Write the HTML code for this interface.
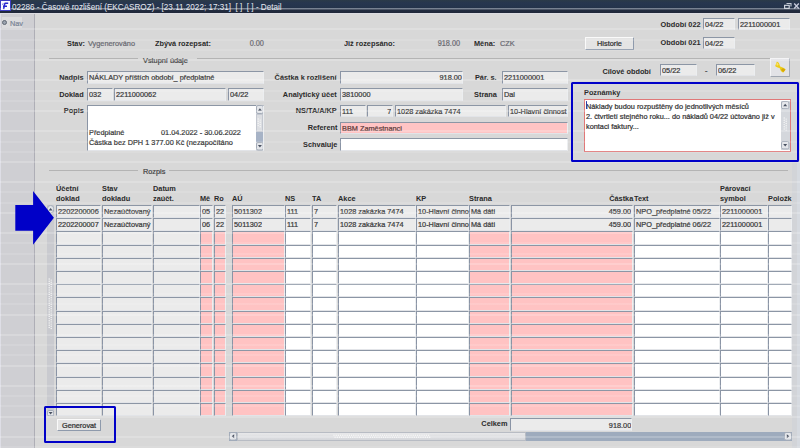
<!DOCTYPE html>
<html><head><meta charset="utf-8">
<style>
html,body{margin:0;padding:0;width:800px;height:448px;overflow:hidden;background:#d8d8d8;}
body{position:relative;font-family:"Liberation Sans",sans-serif;font-size:7.6px;}
.t{position:absolute;white-space:nowrap;line-height:1.4;transform:scaleX(0.965);transform-origin:0 50%;-webkit-text-stroke:0.22px currentColor;}
.t[style*=bold]{-webkit-text-stroke:0;}
.r{transform-origin:100% 50%;}
.c{transform-origin:50% 50%;}
.b{position:absolute;box-sizing:border-box;}
.f{position:absolute;box-sizing:border-box;border-top:1.6px solid #8c96a5;border-left:1.4px solid #8a94a5;border-right:1.2px solid #eceef0;border-bottom:1.2px solid #e2e4e8;}
</style></head><body>

<div class="b" style="left:0px;top:0px;width:800px;height:12.8px;background:linear-gradient(#2b3a48 0px,#27364f 3px,#25344c 7px,#222c40 10px,#20283a 12.8px);"></div>
<div class="b" style="left:0px;top:12.8px;width:800px;height:1.2px;background:#dcdce2;"></div>
<div class="b" style="left:0px;top:8.1px;width:800px;height:1.2px;background:rgba(190,200,215,0.35);"></div>
<div class="b" style="left:0px;top:0px;width:10.5px;height:10.5px;background:#3c3cc0;"></div>
<div class="b" style="left:1px;top:1px;width:9px;height:9px;background:#fafaff;"></div>
<svg style="position:absolute;left:0;top:0" width="11" height="11"><path d="M3.6 9.2L4.6 4.2L5.2 3.2H8.2M3 6.2H7" fill="none" stroke="#2626d0" stroke-width="1.6"/><path d="M2.2 4.4L3.4 3.6" stroke="#4a4ac8" stroke-width="1"/></svg>
<div class="t" style="left:11.8px;top:0.87px;color:#e4e8f0;font-size:9.2px;transform:scaleX(0.885);-webkit-text-stroke:0;">02286 - Časové rozlišení (EKCASROZ) - [23.11.2022; 17:31]&nbsp; [ ]&nbsp; [ ] - Detail</div>
<svg style="position:absolute;left:783px;top:0px" width="17" height="12"><path d="M3.5 3.5h4.5v3" fill="none" stroke="#c4cad4" stroke-width="1.1"/><rect x="1.6" y="5.3" width="4.6" height="3" fill="none" stroke="#d8dde6" stroke-width="1.1"/><path d="M11.2 3.5l4.6 5M15.8 3.5l-4.6 5" stroke="#c8ccdc" stroke-width="1.3"/></svg>
<div class="b" style="left:0px;top:14px;width:34px;height:434px;background:#cfcfd3;border-left:1.5px solid #dedee6;"></div>
<div class="b" style="left:34px;top:14px;width:1px;height:434px;background:#aeaeb6;"></div>
<div class="b" style="left:1.5px;top:17px;width:20.5px;height:10.6px;background:#dcdcde;"></div>
<div class="b" style="left:2px;top:19.8px;width:5.2px;height:5.2px;border-radius:50%;background:#9aa2ae;border:1px solid #606874;"></div>
<div class="t" style="left:9.8px;top:18.75px;color:#7a8596;">Nav</div>
<div class="b" style="left:792.3px;top:162px;width:7.7px;height:286px;background:#d2d4d8;"></div>
<div class="b" style="left:796.5px;top:162px;width:3.5px;height:286px;background:#d6dae0;"></div>
<div class="b" style="left:49px;top:58px;width:88.5px;height:1px;background:#b4b4b4;"></div>
<div class="t" style="left:143px;top:55.85px;color:#444;">Vstupní údaje</div>
<div class="b" style="left:197px;top:58px;width:573px;height:1px;background:#b4b4b4;"></div>
<div class="b" style="left:49px;top:170px;width:89px;height:1px;background:#b4b4b4;"></div>
<div class="t" style="left:143.1px;top:166.90px;color:#444;">Rozpis</div>
<div class="b" style="left:169.4px;top:170px;width:619px;height:1px;background:#b4b4b4;"></div>
<div class="t" style="left:67px;top:38.43px;color:#2a2a2a;font-size:8.0px;transform:scaleX(0.917);font-weight:bold;">Stav:</div>
<div class="t" style="left:87.5px;top:38.85px;color:#6a6a72;">Vygenerováno</div>
<div class="t" style="left:154.5px;top:38.43px;color:#2a2a2a;font-size:8.0px;transform:scaleX(0.917);font-weight:bold;">Zbývá rozepsat:</div>
<div class="t r" style="right:536px;top:38.22px;color:#6a6a72;font-size:8.2px;transform:scaleX(0.895);">0.00</div>
<div class="t" style="left:343.75px;top:38.43px;color:#2a2a2a;font-size:8.0px;transform:scaleX(0.917);font-weight:bold;">Již rozepsáno:</div>
<div class="t r" style="right:339.5px;top:38.22px;color:#6a6a72;font-size:8.2px;transform:scaleX(0.895);">918.00</div>
<div class="t" style="left:473.75px;top:38.43px;color:#2a2a2a;font-size:8.0px;transform:scaleX(0.917);font-weight:bold;">Měna:</div>
<div class="t" style="left:500px;top:38.85px;color:#6a6a72;">CZK</div>
<div class="b" style="left:585px;top:37.4px;width:49px;height:12.2px;background:#e4e4e4;border:1px solid #fafafa;border-right-color:#8e9aac;border-bottom:1.5px solid #8e9aac;border-radius:1px;"></div>
<div class="t c" style="left:585px;width:49px;text-align:center;top:39.05px;color:#2e2e2e;">Historie</div>
<div class="t r" style="right:99.70000000000005px;top:18.93px;color:#2a2a2a;font-size:8.0px;transform:scaleX(0.917);font-weight:bold;">Období 022</div>
<div class="f" style="left:703px;top:18px;width:32px;height:12px;background:#ebebeb;"></div>
<div class="t" style="left:705px;width:31.09px;top:19.85px;color:#3a3a3a;overflow:hidden">04/22</div>
<div class="f" style="left:738px;top:18px;width:52px;height:12px;background:#ebebeb;"></div>
<div class="t" style="left:740px;width:51.81px;top:19.85px;color:#3a3a3a;overflow:hidden">2211000001</div>
<div class="t r" style="right:99.70000000000005px;top:37.33px;color:#2a2a2a;font-size:8.0px;transform:scaleX(0.917);font-weight:bold;">Období 021</div>
<div class="f" style="left:703px;top:37px;width:32px;height:12px;background:#ebebeb;"></div>
<div class="t" style="left:705px;width:31.09px;top:38.85px;color:#3a3a3a;overflow:hidden">04/22</div>
<div class="t r" style="right:149px;top:65.73px;color:#2a2a2a;font-size:8.0px;transform:scaleX(0.917);font-weight:bold;">Cílové období</div>
<div class="f" style="left:660px;top:64px;width:37px;height:12px;background:#ebebeb;"></div>
<div class="t" style="left:662px;width:36.27px;top:65.85px;color:#3a3a3a;overflow:hidden">05/22</div>
<div class="t" style="left:705px;top:66.15px;color:#444;">-</div>
<div class="f" style="left:716px;top:64.4px;width:39px;height:11.6px;background:#ebebeb;"></div>
<div class="t" style="left:718px;width:38.34px;top:66.05px;color:#3a3a3a;overflow:hidden">06/22</div>
<div class="b" style="left:770.3px;top:57.6px;width:19.3px;height:19.1px;background:#e2e2e6;border:1.2px solid #f4f4f6;border-right-color:#a8aeb8;border-bottom:1.5px solid #a0a6b0;"></div>
<svg style="position:absolute;left:770px;top:57px" width="20" height="20"><path d="M6.8 4.8C8 4.6 9.3 6.2 9.6 8L10.2 9.6L12 10.2C13.6 10.6 15.2 11.6 15.6 12.6L13.4 15.4C12 15.2 10.6 13.8 10.2 12.4L9.6 11C8 10.8 6 10 5.2 9Z" fill="#eccc18"/><path d="M12.6 11.2C14 11.4 15 12.2 15.4 12.8L13.4 15C12.4 14.6 11.4 13.6 11.2 12.6Z" fill="#d8a808"/><path d="M6.8 5.4C7.6 5.6 8.4 6.8 8.6 8L7 8.8C6.4 8 6.2 6.6 6.8 5.4Z" fill="#f8e070"/></svg>
<div class="t r" style="right:716px;top:72.23px;color:#2a2a2a;font-size:8.0px;transform:scaleX(0.917);font-weight:bold;">Nadpis</div>
<div class="f" style="left:87px;top:71px;width:177px;height:12.8px;background:#ebebeb;"></div>
<div class="t" style="left:89px;width:181.35px;top:73.25px;color:#3a3a3a;overflow:hidden">NÁKLADY příštích období_ předplatné</div>
<div class="t r" style="right:716px;top:89.23px;color:#2a2a2a;font-size:8.0px;transform:scaleX(0.917);font-weight:bold;">Doklad</div>
<div class="f" style="left:87px;top:88.2px;width:26px;height:12.6px;background:#ebebeb;"></div>
<div class="t" style="left:89px;width:24.87px;top:90.35px;color:#3a3a3a;overflow:hidden">032</div>
<div class="f" style="left:114.4px;top:88.2px;width:112px;height:12.6px;background:#ebebeb;"></div>
<div class="t" style="left:116.4px;width:113.99px;top:90.35px;color:#3a3a3a;overflow:hidden">2211000062</div>
<div class="f" style="left:227.5px;top:88.2px;width:36.5px;height:12.6px;background:#ebebeb;"></div>
<div class="t" style="left:229.5px;width:35.75px;top:90.35px;color:#3a3a3a;overflow:hidden">04/22</div>
<div class="t r" style="right:716px;top:105.33px;color:#2a2a2a;font-size:8.0px;transform:scaleX(0.917);font-weight:bold;">Popis</div>
<div class="f" style="left:87.2px;top:104.8px;width:176.5px;height:46px;background:#fff;"></div>
<div class="t" style="left:89px;top:127.75px;color:#333;">Předplatné</div>
<div class="t" style="left:161.3px;top:127.75px;color:#333;">01.04.2022 - 30.06.2022</div>
<div class="t" style="left:89px;top:137.90px;color:#333;">Částka bez DPH 1 377.00 Kč (nezapočítáno</div>
<div class="b" style="left:88px;top:147.5px;width:166px;height:2.5px;overflow:hidden"><div class="t" style="left:1px;top:0.25px;color:#555">vč. úhrad 3 dílčích faktur</div></div>
<div class="b" style="left:255.5px;top:105px;width:7.8px;height:45.5px;background:#d2d5da;"></div>
<svg style="position:absolute;left:255.5px;top:105px" width="7.8" height="9"><rect x="0.5" y="0.5" width="6.8" height="8" rx="1.5" fill="#e4e6ea" stroke="#a4acb8" stroke-width="1"/><path d="M1.90 5.70L3.90 3.20L5.90 5.70Z" fill="#4a5262"/></svg>
<div class="b" style="left:255.5px;top:114px;width:7.8px;height:17.8px;background:#dcdee2;border:1px solid #c4c8d0;"></div>
<svg style="position:absolute;left:257px;top:118px" width="5.0" height="10.8"><circle cx="1.2" cy="1.00" r="0.7" fill="#f8f8f8"/><circle cx="3.2" cy="2.10" r="0.7" fill="#f8f8f8"/><circle cx="1.2" cy="3.20" r="0.7" fill="#f8f8f8"/><circle cx="3.2" cy="4.30" r="0.7" fill="#f8f8f8"/><circle cx="1.2" cy="5.40" r="0.7" fill="#f8f8f8"/><circle cx="3.2" cy="6.50" r="0.7" fill="#f8f8f8"/><circle cx="1.2" cy="7.60" r="0.7" fill="#f8f8f8"/><circle cx="3.2" cy="8.70" r="0.7" fill="#f8f8f8"/></svg>
<div class="b" style="left:255.5px;top:131.8px;width:7.8px;height:10.2px;background:#a7b3c6;"></div>
<svg style="position:absolute;left:255.5px;top:142px" width="7.8" height="8.5"><rect x="0.5" y="0.5" width="6.8" height="7.5" rx="1.5" fill="#e4e6ea" stroke="#a4acb8" stroke-width="1"/><path d="M1.90 3.05L3.90 5.55L5.90 3.05Z" fill="#4a5262"/></svg>
<div class="t r" style="right:463px;top:72.23px;color:#2a2a2a;font-size:8.0px;transform:scaleX(0.917);font-weight:bold;">Částka k rozlišení</div>
<div class="f" style="left:340px;top:71px;width:123px;height:12.8px;background:#ebebeb;"></div>
<div class="t r" style="left:335.59px;width:125.91px;text-align:right;top:73.25px;color:#3a3a3a;overflow:hidden">918.00</div>
<div class="t r" style="right:463px;top:89.23px;color:#2a2a2a;font-size:8.0px;transform:scaleX(0.917);font-weight:bold;">Analytický účet</div>
<div class="f" style="left:340px;top:88.2px;width:123px;height:12.6px;background:#ebebeb;"></div>
<div class="t" style="left:342px;width:125.39px;top:90.35px;color:#3a3a3a;overflow:hidden">3810000</div>
<div class="t r" style="right:463px;top:105.43px;color:#2a2a2a;font-size:8.0px;transform:scaleX(0.917);font-weight:bold;">NS/TA/A/KP</div>
<div class="f" style="left:340px;top:105px;width:25.6px;height:12px;background:#ebebeb;"></div>
<div class="t" style="left:342px;width:24.46px;top:106.85px;color:#3a3a3a;overflow:hidden">111</div>
<div class="f" style="left:367px;top:105px;width:26px;height:12px;background:#ebebeb;"></div>
<div class="t r" style="left:366.11px;width:25.39px;text-align:right;top:106.85px;color:#3a3a3a;overflow:hidden">7</div>
<div class="f" style="left:394.6px;top:105px;width:111px;height:12px;background:#ebebeb;"></div>
<div class="t" style="left:396.6px;width:112.95px;top:106.85px;color:#3a3a3a;overflow:hidden">1028 zakázka 7474</div>
<div class="f" style="left:507.5px;top:105px;width:60px;height:12px;background:#ebebeb;"></div>
<div class="t" style="left:509.5px;width:60.10px;top:106.85px;color:#3a3a3a;overflow:hidden">10-Hlavní činnost</div>
<div class="t r" style="right:463px;top:122.33px;color:#2a2a2a;font-size:8.0px;transform:scaleX(0.917);font-weight:bold;">Referent</div>
<div class="f" style="left:340px;top:122.2px;width:227.5px;height:11.8px;background:#ffc4c4;"></div>
<div class="t" style="left:342px;width:233.68px;top:123.95px;color:#5a3838;overflow:hidden">BBM Zaměstnanci</div>
<div class="t r" style="right:463px;top:138.83px;color:#2a2a2a;font-size:8.0px;transform:scaleX(0.917);font-weight:bold;">Schvaluje</div>
<div class="f" style="left:340px;top:138px;width:227.5px;height:12.5px;background:#fff;"></div>
<div class="t r" style="right:303px;top:72.23px;color:#2a2a2a;font-size:8.0px;transform:scaleX(0.917);font-weight:bold;">Pár. s.</div>
<div class="f" style="left:502px;top:71px;width:66px;height:12.8px;background:#ebebeb;"></div>
<div class="t" style="left:504px;width:66.32px;top:73.25px;color:#3a3a3a;overflow:hidden">2211000001</div>
<div class="t r" style="right:303px;top:89.23px;color:#2a2a2a;font-size:8.0px;transform:scaleX(0.917);font-weight:bold;">Strana</div>
<div class="f" style="left:502px;top:88.2px;width:66px;height:12.6px;background:#ebebeb;"></div>
<div class="t" style="left:504px;width:66.32px;top:90.35px;color:#3a3a3a;overflow:hidden">Dal</div>
<div class="b" style="left:571.3px;top:82.3px;width:227.8px;height:79.9px;border:2.9px solid #0000c8;border-radius:1.5px;z-index:5;"></div>
<div class="t" style="left:584px;top:87.13px;color:#2a2a2a;font-size:8.0px;transform:scaleX(0.917);font-weight:bold;">Poznámky</div>
<div class="b" style="left:584.2px;top:98.5px;width:206.8px;height:53px;background:#fff;border:1px solid #e07878;"></div>
<div class="t" style="left:586.4px;top:101.65px;color:#333;">Náklady budou rozpuštěny do jednotlivých měsíců</div>
<div class="b" style="left:585.6px;top:100.8px;width:1px;height:8.6px;background:#3040a0;"></div>
<div class="t" style="left:586.4px;top:111.95px;color:#333;">2. čtvrtletí stejného roku... do nákladů 04/22 účtováno již v</div>
<div class="t" style="left:586.4px;top:122.15px;color:#333;">kontaci faktury...</div>
<div class="b" style="left:781.2px;top:101px;width:8.4px;height:49px;background:#d4d7dc;"></div>
<svg style="position:absolute;left:781.2px;top:100.8px" width="8.4" height="8.2"><rect x="0.5" y="0.5" width="7.4" height="7.199999999999999" rx="1.5" fill="#e4e6ea" stroke="#a4acb8" stroke-width="1"/><path d="M2.20 5.30L4.20 2.80L6.20 5.30Z" fill="#4a5262"/></svg>
<svg style="position:absolute;left:783px;top:117px" width="5.0" height="15.2"><circle cx="1.2" cy="1.00" r="0.7" fill="#f8f8f8"/><circle cx="3.2" cy="2.10" r="0.7" fill="#f8f8f8"/><circle cx="1.2" cy="3.20" r="0.7" fill="#f8f8f8"/><circle cx="3.2" cy="4.30" r="0.7" fill="#f8f8f8"/><circle cx="1.2" cy="5.40" r="0.7" fill="#f8f8f8"/><circle cx="3.2" cy="6.50" r="0.7" fill="#f8f8f8"/><circle cx="1.2" cy="7.60" r="0.7" fill="#f8f8f8"/><circle cx="3.2" cy="8.70" r="0.7" fill="#f8f8f8"/><circle cx="1.2" cy="9.80" r="0.7" fill="#f8f8f8"/><circle cx="3.2" cy="10.90" r="0.7" fill="#f8f8f8"/><circle cx="1.2" cy="12.00" r="0.7" fill="#f8f8f8"/><circle cx="3.2" cy="13.10" r="0.7" fill="#f8f8f8"/></svg>
<svg style="position:absolute;left:781.2px;top:141.4px" width="8.4" height="8.4"><rect x="0.5" y="0.5" width="7.4" height="7.4" rx="1.5" fill="#e4e6ea" stroke="#a4acb8" stroke-width="1"/><path d="M2.20 3.00L4.20 5.50L6.20 3.00Z" fill="#4a5262"/></svg>
<div class="t" style="left:56px;top:183.43px;color:#2a2a2a;font-size:8.0px;transform:scaleX(0.917);font-weight:bold;">Účetní</div>
<div class="t" style="left:56px;top:193.43px;color:#2a2a2a;font-size:8.0px;transform:scaleX(0.917);font-weight:bold;">doklad</div>
<div class="t" style="left:102px;top:183.43px;color:#2a2a2a;font-size:8.0px;transform:scaleX(0.917);font-weight:bold;">Stav</div>
<div class="t" style="left:102px;top:193.43px;color:#2a2a2a;font-size:8.0px;transform:scaleX(0.917);font-weight:bold;">dokladu</div>
<div class="t" style="left:153px;top:183.43px;color:#2a2a2a;font-size:8.0px;transform:scaleX(0.917);font-weight:bold;">Datum</div>
<div class="t" style="left:153px;top:193.43px;color:#2a2a2a;font-size:8.0px;transform:scaleX(0.917);font-weight:bold;">zaúčt.</div>
<div class="t" style="left:200px;top:193.43px;color:#2a2a2a;font-size:8.0px;transform:scaleX(0.917);font-weight:bold;">Mě</div>
<div class="t" style="left:213.5px;top:193.43px;color:#2a2a2a;font-size:8.0px;transform:scaleX(0.917);font-weight:bold;">Ro</div>
<div class="t" style="left:232px;top:193.43px;color:#2a2a2a;font-size:8.0px;transform:scaleX(0.917);font-weight:bold;">AÚ</div>
<div class="t" style="left:285px;top:193.43px;color:#2a2a2a;font-size:8.0px;transform:scaleX(0.917);font-weight:bold;">NS</div>
<div class="t" style="left:311.5px;top:193.43px;color:#2a2a2a;font-size:8.0px;transform:scaleX(0.917);font-weight:bold;">TA</div>
<div class="t" style="left:337.5px;top:193.43px;color:#2a2a2a;font-size:8.0px;transform:scaleX(0.917);font-weight:bold;">Akce</div>
<div class="t" style="left:416.3px;top:193.43px;color:#2a2a2a;font-size:8.0px;transform:scaleX(0.917);font-weight:bold;">KP</div>
<div class="t" style="left:469.2px;top:193.43px;color:#2a2a2a;font-size:8.0px;transform:scaleX(0.917);font-weight:bold;">Strana</div>
<div class="t r" style="right:167px;top:193.43px;color:#2a2a2a;font-size:8.0px;transform:scaleX(0.917);font-weight:bold;">Částka</div>
<div class="t" style="left:633.5px;top:193.43px;color:#2a2a2a;font-size:8.0px;transform:scaleX(0.917);font-weight:bold;">Text</div>
<div class="t" style="left:720.2px;top:183.43px;color:#2a2a2a;font-size:8.0px;transform:scaleX(0.917);font-weight:bold;">Párovací</div>
<div class="t" style="left:720.2px;top:193.43px;color:#2a2a2a;font-size:8.0px;transform:scaleX(0.917);font-weight:bold;">symbol</div>
<div class="t" style="left:768.2px;top:193.43px;color:#2a2a2a;font-size:8.0px;transform:scaleX(0.917);font-weight:bold;width:26.17px;overflow:hidden;">Položk</div>
<div class="f" style="left:56px;top:205.0px;width:45px;height:13.2px;background:#ebebeb;"></div>
<div class="t" style="left:58px;width:44.56px;top:206.85px;color:#3a3a3a;overflow:hidden">2202200006</div>
<div class="f" style="left:102px;top:205.0px;width:50px;height:13.2px;background:#ebebeb;"></div>
<div class="t" style="left:104px;width:49.74px;top:206.85px;color:#3a3a3a;overflow:hidden">Nezaúčtovaný</div>
<div class="f" style="left:153px;top:205.0px;width:46.5px;height:13.2px;background:#ebebeb;"></div>
<div class="f" style="left:200px;top:205.0px;width:13px;height:13.2px;background:#ebebeb;"></div>
<div class="t" style="left:202px;width:11.40px;top:206.85px;color:#3a3a3a;overflow:hidden">05</div>
<div class="f" style="left:213.5px;top:205.0px;width:12.5px;height:13.2px;background:#ebebeb;"></div>
<div class="t" style="left:215.5px;width:10.88px;top:206.85px;color:#3a3a3a;overflow:hidden">22</div>
<div class="f" style="left:232px;top:205.0px;width:52.5px;height:13.2px;background:#ebebeb;"></div>
<div class="t" style="left:234px;width:52.33px;top:206.85px;color:#3a3a3a;overflow:hidden">5011302</div>
<div class="f" style="left:285px;top:205.0px;width:26px;height:13.2px;background:#ebebeb;"></div>
<div class="t" style="left:287px;width:24.87px;top:206.85px;color:#3a3a3a;overflow:hidden">111</div>
<div class="f" style="left:311.5px;top:205.0px;width:25.5px;height:13.2px;background:#ebebeb;"></div>
<div class="t" style="left:313.5px;width:24.35px;top:206.85px;color:#3a3a3a;overflow:hidden">7</div>
<div class="f" style="left:337.5px;top:205.0px;width:78.5px;height:13.2px;background:#ebebeb;"></div>
<div class="t" style="left:339.5px;width:79.27px;top:206.85px;color:#3a3a3a;overflow:hidden">1028 zakázka 7474</div>
<div class="f" style="left:416.3px;top:205.0px;width:52.7px;height:13.2px;background:#ebebeb;"></div>
<div class="t" style="left:418.3px;width:52.54px;top:206.85px;color:#3a3a3a;overflow:hidden">10-Hlavní činnost</div>
<div class="f" style="left:469.2px;top:205.0px;width:41.0px;height:13.2px;background:#ebebeb;"></div>
<div class="t" style="left:471.2px;width:40.41px;top:206.85px;color:#3a3a3a;overflow:hidden">Má dáti</div>
<div class="f" style="left:510.75px;top:205.0px;width:122.25px;height:13.2px;background:#ebebeb;"></div>
<div class="t r" style="left:506.37px;width:125.13px;text-align:right;top:206.85px;color:#3a3a3a;overflow:hidden">459.00</div>
<div class="f" style="left:633.5px;top:205.0px;width:86.3px;height:13.2px;background:#ebebeb;"></div>
<div class="t" style="left:635.5px;width:87.36px;top:206.85px;color:#3a3a3a;overflow:hidden">NPO_předplatné 05/22</div>
<div class="f" style="left:720.2px;top:205.0px;width:47.4px;height:13.2px;background:#ebebeb;"></div>
<div class="t" style="left:722.2px;width:47.05px;top:206.85px;color:#3a3a3a;overflow:hidden">2211000001</div>
<div class="f" style="left:768.2px;top:205.0px;width:24.1px;height:13.2px;background:#ebebeb;"></div>
<div class="f" style="left:56px;top:218.2px;width:45px;height:13.2px;background:#ebebeb;"></div>
<div class="t" style="left:58px;width:44.56px;top:220.05px;color:#3a3a3a;overflow:hidden">2202200007</div>
<div class="f" style="left:102px;top:218.2px;width:50px;height:13.2px;background:#ebebeb;"></div>
<div class="t" style="left:104px;width:49.74px;top:220.05px;color:#3a3a3a;overflow:hidden">Nezaúčtovaný</div>
<div class="f" style="left:153px;top:218.2px;width:46.5px;height:13.2px;background:#ebebeb;"></div>
<div class="f" style="left:200px;top:218.2px;width:13px;height:13.2px;background:#ebebeb;"></div>
<div class="t" style="left:202px;width:11.40px;top:220.05px;color:#3a3a3a;overflow:hidden">06</div>
<div class="f" style="left:213.5px;top:218.2px;width:12.5px;height:13.2px;background:#ebebeb;"></div>
<div class="t" style="left:215.5px;width:10.88px;top:220.05px;color:#3a3a3a;overflow:hidden">22</div>
<div class="f" style="left:232px;top:218.2px;width:52.5px;height:13.2px;background:#ebebeb;"></div>
<div class="t" style="left:234px;width:52.33px;top:220.05px;color:#3a3a3a;overflow:hidden">5011302</div>
<div class="f" style="left:285px;top:218.2px;width:26px;height:13.2px;background:#ebebeb;"></div>
<div class="t" style="left:287px;width:24.87px;top:220.05px;color:#3a3a3a;overflow:hidden">111</div>
<div class="f" style="left:311.5px;top:218.2px;width:25.5px;height:13.2px;background:#ebebeb;"></div>
<div class="t" style="left:313.5px;width:24.35px;top:220.05px;color:#3a3a3a;overflow:hidden">7</div>
<div class="f" style="left:337.5px;top:218.2px;width:78.5px;height:13.2px;background:#ebebeb;"></div>
<div class="t" style="left:339.5px;width:79.27px;top:220.05px;color:#3a3a3a;overflow:hidden">1028 zakázka 7474</div>
<div class="f" style="left:416.3px;top:218.2px;width:52.7px;height:13.2px;background:#ebebeb;"></div>
<div class="t" style="left:418.3px;width:52.54px;top:220.05px;color:#3a3a3a;overflow:hidden">10-Hlavní činnost</div>
<div class="f" style="left:469.2px;top:218.2px;width:41.0px;height:13.2px;background:#ebebeb;"></div>
<div class="t" style="left:471.2px;width:40.41px;top:220.05px;color:#3a3a3a;overflow:hidden">Má dáti</div>
<div class="f" style="left:510.75px;top:218.2px;width:122.25px;height:13.2px;background:#ebebeb;"></div>
<div class="t r" style="left:506.37px;width:125.13px;text-align:right;top:220.05px;color:#3a3a3a;overflow:hidden">459.00</div>
<div class="f" style="left:633.5px;top:218.2px;width:86.3px;height:13.2px;background:#ebebeb;"></div>
<div class="t" style="left:635.5px;width:87.36px;top:220.05px;color:#3a3a3a;overflow:hidden">NPO_předplatné 06/22</div>
<div class="f" style="left:720.2px;top:218.2px;width:47.4px;height:13.2px;background:#ebebeb;"></div>
<div class="t" style="left:722.2px;width:47.05px;top:220.05px;color:#3a3a3a;overflow:hidden">2211000001</div>
<div class="f" style="left:768.2px;top:218.2px;width:24.1px;height:13.2px;background:#ebebeb;"></div>
<div class="f" style="left:56px;top:231.4px;width:45px;height:13.2px;background:#ebebeb;"></div>
<div class="f" style="left:102px;top:231.4px;width:50px;height:13.2px;background:#ebebeb;"></div>
<div class="f" style="left:153px;top:231.4px;width:46.5px;height:13.2px;background:#ebebeb;"></div>
<div class="f" style="left:200px;top:231.4px;width:13px;height:13.2px;background:#ffc3c3;"></div>
<div class="f" style="left:213.5px;top:231.4px;width:12.5px;height:13.2px;background:#ffc3c3;"></div>
<div class="f" style="left:232px;top:231.4px;width:52.5px;height:13.2px;background:#ffc3c3;"></div>
<div class="f" style="left:285px;top:231.4px;width:26px;height:13.2px;background:#ffffff;"></div>
<div class="f" style="left:311.5px;top:231.4px;width:25.5px;height:13.2px;background:#ffffff;"></div>
<div class="f" style="left:337.5px;top:231.4px;width:78.5px;height:13.2px;background:#ffffff;"></div>
<div class="f" style="left:416.3px;top:231.4px;width:52.7px;height:13.2px;background:#ffffff;"></div>
<div class="f" style="left:469.2px;top:231.4px;width:41.0px;height:13.2px;background:#ffc3c3;"></div>
<div class="f" style="left:510.75px;top:231.4px;width:122.25px;height:13.2px;background:#ffc3c3;"></div>
<div class="f" style="left:633.5px;top:231.4px;width:86.3px;height:13.2px;background:#ffffff;"></div>
<div class="f" style="left:720.2px;top:231.4px;width:47.4px;height:13.2px;background:#ffffff;"></div>
<div class="f" style="left:768.2px;top:231.4px;width:24.1px;height:13.2px;background:#ffffff;"></div>
<div class="f" style="left:56px;top:244.6px;width:45px;height:13.2px;background:#ebebeb;"></div>
<div class="f" style="left:102px;top:244.6px;width:50px;height:13.2px;background:#ebebeb;"></div>
<div class="f" style="left:153px;top:244.6px;width:46.5px;height:13.2px;background:#ebebeb;"></div>
<div class="f" style="left:200px;top:244.6px;width:13px;height:13.2px;background:#ffc3c3;"></div>
<div class="f" style="left:213.5px;top:244.6px;width:12.5px;height:13.2px;background:#ffc3c3;"></div>
<div class="f" style="left:232px;top:244.6px;width:52.5px;height:13.2px;background:#ffc3c3;"></div>
<div class="f" style="left:285px;top:244.6px;width:26px;height:13.2px;background:#ffffff;"></div>
<div class="f" style="left:311.5px;top:244.6px;width:25.5px;height:13.2px;background:#ffffff;"></div>
<div class="f" style="left:337.5px;top:244.6px;width:78.5px;height:13.2px;background:#ffffff;"></div>
<div class="f" style="left:416.3px;top:244.6px;width:52.7px;height:13.2px;background:#ffffff;"></div>
<div class="f" style="left:469.2px;top:244.6px;width:41.0px;height:13.2px;background:#ffc3c3;"></div>
<div class="f" style="left:510.75px;top:244.6px;width:122.25px;height:13.2px;background:#ffc3c3;"></div>
<div class="f" style="left:633.5px;top:244.6px;width:86.3px;height:13.2px;background:#ffffff;"></div>
<div class="f" style="left:720.2px;top:244.6px;width:47.4px;height:13.2px;background:#ffffff;"></div>
<div class="f" style="left:768.2px;top:244.6px;width:24.1px;height:13.2px;background:#ffffff;"></div>
<div class="f" style="left:56px;top:257.8px;width:45px;height:13.2px;background:#ebebeb;"></div>
<div class="f" style="left:102px;top:257.8px;width:50px;height:13.2px;background:#ebebeb;"></div>
<div class="f" style="left:153px;top:257.8px;width:46.5px;height:13.2px;background:#ebebeb;"></div>
<div class="f" style="left:200px;top:257.8px;width:13px;height:13.2px;background:#ffc3c3;"></div>
<div class="f" style="left:213.5px;top:257.8px;width:12.5px;height:13.2px;background:#ffc3c3;"></div>
<div class="f" style="left:232px;top:257.8px;width:52.5px;height:13.2px;background:#ffc3c3;"></div>
<div class="f" style="left:285px;top:257.8px;width:26px;height:13.2px;background:#ffffff;"></div>
<div class="f" style="left:311.5px;top:257.8px;width:25.5px;height:13.2px;background:#ffffff;"></div>
<div class="f" style="left:337.5px;top:257.8px;width:78.5px;height:13.2px;background:#ffffff;"></div>
<div class="f" style="left:416.3px;top:257.8px;width:52.7px;height:13.2px;background:#ffffff;"></div>
<div class="f" style="left:469.2px;top:257.8px;width:41.0px;height:13.2px;background:#ffc3c3;"></div>
<div class="f" style="left:510.75px;top:257.8px;width:122.25px;height:13.2px;background:#ffc3c3;"></div>
<div class="f" style="left:633.5px;top:257.8px;width:86.3px;height:13.2px;background:#ffffff;"></div>
<div class="f" style="left:720.2px;top:257.8px;width:47.4px;height:13.2px;background:#ffffff;"></div>
<div class="f" style="left:768.2px;top:257.8px;width:24.1px;height:13.2px;background:#ffffff;"></div>
<div class="f" style="left:56px;top:271.0px;width:45px;height:13.2px;background:#ebebeb;"></div>
<div class="f" style="left:102px;top:271.0px;width:50px;height:13.2px;background:#ebebeb;"></div>
<div class="f" style="left:153px;top:271.0px;width:46.5px;height:13.2px;background:#ebebeb;"></div>
<div class="f" style="left:200px;top:271.0px;width:13px;height:13.2px;background:#ffc3c3;"></div>
<div class="f" style="left:213.5px;top:271.0px;width:12.5px;height:13.2px;background:#ffc3c3;"></div>
<div class="f" style="left:232px;top:271.0px;width:52.5px;height:13.2px;background:#ffc3c3;"></div>
<div class="f" style="left:285px;top:271.0px;width:26px;height:13.2px;background:#ffffff;"></div>
<div class="f" style="left:311.5px;top:271.0px;width:25.5px;height:13.2px;background:#ffffff;"></div>
<div class="f" style="left:337.5px;top:271.0px;width:78.5px;height:13.2px;background:#ffffff;"></div>
<div class="f" style="left:416.3px;top:271.0px;width:52.7px;height:13.2px;background:#ffffff;"></div>
<div class="f" style="left:469.2px;top:271.0px;width:41.0px;height:13.2px;background:#ffc3c3;"></div>
<div class="f" style="left:510.75px;top:271.0px;width:122.25px;height:13.2px;background:#ffc3c3;"></div>
<div class="f" style="left:633.5px;top:271.0px;width:86.3px;height:13.2px;background:#ffffff;"></div>
<div class="f" style="left:720.2px;top:271.0px;width:47.4px;height:13.2px;background:#ffffff;"></div>
<div class="f" style="left:768.2px;top:271.0px;width:24.1px;height:13.2px;background:#ffffff;"></div>
<div class="f" style="left:56px;top:284.2px;width:45px;height:13.2px;background:#ebebeb;"></div>
<div class="f" style="left:102px;top:284.2px;width:50px;height:13.2px;background:#ebebeb;"></div>
<div class="f" style="left:153px;top:284.2px;width:46.5px;height:13.2px;background:#ebebeb;"></div>
<div class="f" style="left:200px;top:284.2px;width:13px;height:13.2px;background:#ffc3c3;"></div>
<div class="f" style="left:213.5px;top:284.2px;width:12.5px;height:13.2px;background:#ffc3c3;"></div>
<div class="f" style="left:232px;top:284.2px;width:52.5px;height:13.2px;background:#ffc3c3;"></div>
<div class="f" style="left:285px;top:284.2px;width:26px;height:13.2px;background:#ffffff;"></div>
<div class="f" style="left:311.5px;top:284.2px;width:25.5px;height:13.2px;background:#ffffff;"></div>
<div class="f" style="left:337.5px;top:284.2px;width:78.5px;height:13.2px;background:#ffffff;"></div>
<div class="f" style="left:416.3px;top:284.2px;width:52.7px;height:13.2px;background:#ffffff;"></div>
<div class="f" style="left:469.2px;top:284.2px;width:41.0px;height:13.2px;background:#ffc3c3;"></div>
<div class="f" style="left:510.75px;top:284.2px;width:122.25px;height:13.2px;background:#ffc3c3;"></div>
<div class="f" style="left:633.5px;top:284.2px;width:86.3px;height:13.2px;background:#ffffff;"></div>
<div class="f" style="left:720.2px;top:284.2px;width:47.4px;height:13.2px;background:#ffffff;"></div>
<div class="f" style="left:768.2px;top:284.2px;width:24.1px;height:13.2px;background:#ffffff;"></div>
<div class="f" style="left:56px;top:297.4px;width:45px;height:13.2px;background:#ebebeb;"></div>
<div class="f" style="left:102px;top:297.4px;width:50px;height:13.2px;background:#ebebeb;"></div>
<div class="f" style="left:153px;top:297.4px;width:46.5px;height:13.2px;background:#ebebeb;"></div>
<div class="f" style="left:200px;top:297.4px;width:13px;height:13.2px;background:#ffc3c3;"></div>
<div class="f" style="left:213.5px;top:297.4px;width:12.5px;height:13.2px;background:#ffc3c3;"></div>
<div class="f" style="left:232px;top:297.4px;width:52.5px;height:13.2px;background:#ffc3c3;"></div>
<div class="f" style="left:285px;top:297.4px;width:26px;height:13.2px;background:#ffffff;"></div>
<div class="f" style="left:311.5px;top:297.4px;width:25.5px;height:13.2px;background:#ffffff;"></div>
<div class="f" style="left:337.5px;top:297.4px;width:78.5px;height:13.2px;background:#ffffff;"></div>
<div class="f" style="left:416.3px;top:297.4px;width:52.7px;height:13.2px;background:#ffffff;"></div>
<div class="f" style="left:469.2px;top:297.4px;width:41.0px;height:13.2px;background:#ffc3c3;"></div>
<div class="f" style="left:510.75px;top:297.4px;width:122.25px;height:13.2px;background:#ffc3c3;"></div>
<div class="f" style="left:633.5px;top:297.4px;width:86.3px;height:13.2px;background:#ffffff;"></div>
<div class="f" style="left:720.2px;top:297.4px;width:47.4px;height:13.2px;background:#ffffff;"></div>
<div class="f" style="left:768.2px;top:297.4px;width:24.1px;height:13.2px;background:#ffffff;"></div>
<div class="f" style="left:56px;top:310.6px;width:45px;height:13.2px;background:#ebebeb;"></div>
<div class="f" style="left:102px;top:310.6px;width:50px;height:13.2px;background:#ebebeb;"></div>
<div class="f" style="left:153px;top:310.6px;width:46.5px;height:13.2px;background:#ebebeb;"></div>
<div class="f" style="left:200px;top:310.6px;width:13px;height:13.2px;background:#ffc3c3;"></div>
<div class="f" style="left:213.5px;top:310.6px;width:12.5px;height:13.2px;background:#ffc3c3;"></div>
<div class="f" style="left:232px;top:310.6px;width:52.5px;height:13.2px;background:#ffc3c3;"></div>
<div class="f" style="left:285px;top:310.6px;width:26px;height:13.2px;background:#ffffff;"></div>
<div class="f" style="left:311.5px;top:310.6px;width:25.5px;height:13.2px;background:#ffffff;"></div>
<div class="f" style="left:337.5px;top:310.6px;width:78.5px;height:13.2px;background:#ffffff;"></div>
<div class="f" style="left:416.3px;top:310.6px;width:52.7px;height:13.2px;background:#ffffff;"></div>
<div class="f" style="left:469.2px;top:310.6px;width:41.0px;height:13.2px;background:#ffc3c3;"></div>
<div class="f" style="left:510.75px;top:310.6px;width:122.25px;height:13.2px;background:#ffc3c3;"></div>
<div class="f" style="left:633.5px;top:310.6px;width:86.3px;height:13.2px;background:#ffffff;"></div>
<div class="f" style="left:720.2px;top:310.6px;width:47.4px;height:13.2px;background:#ffffff;"></div>
<div class="f" style="left:768.2px;top:310.6px;width:24.1px;height:13.2px;background:#ffffff;"></div>
<div class="f" style="left:56px;top:323.8px;width:45px;height:13.2px;background:#ebebeb;"></div>
<div class="f" style="left:102px;top:323.8px;width:50px;height:13.2px;background:#ebebeb;"></div>
<div class="f" style="left:153px;top:323.8px;width:46.5px;height:13.2px;background:#ebebeb;"></div>
<div class="f" style="left:200px;top:323.8px;width:13px;height:13.2px;background:#ffc3c3;"></div>
<div class="f" style="left:213.5px;top:323.8px;width:12.5px;height:13.2px;background:#ffc3c3;"></div>
<div class="f" style="left:232px;top:323.8px;width:52.5px;height:13.2px;background:#ffc3c3;"></div>
<div class="f" style="left:285px;top:323.8px;width:26px;height:13.2px;background:#ffffff;"></div>
<div class="f" style="left:311.5px;top:323.8px;width:25.5px;height:13.2px;background:#ffffff;"></div>
<div class="f" style="left:337.5px;top:323.8px;width:78.5px;height:13.2px;background:#ffffff;"></div>
<div class="f" style="left:416.3px;top:323.8px;width:52.7px;height:13.2px;background:#ffffff;"></div>
<div class="f" style="left:469.2px;top:323.8px;width:41.0px;height:13.2px;background:#ffc3c3;"></div>
<div class="f" style="left:510.75px;top:323.8px;width:122.25px;height:13.2px;background:#ffc3c3;"></div>
<div class="f" style="left:633.5px;top:323.8px;width:86.3px;height:13.2px;background:#ffffff;"></div>
<div class="f" style="left:720.2px;top:323.8px;width:47.4px;height:13.2px;background:#ffffff;"></div>
<div class="f" style="left:768.2px;top:323.8px;width:24.1px;height:13.2px;background:#ffffff;"></div>
<div class="f" style="left:56px;top:337.0px;width:45px;height:13.2px;background:#ebebeb;"></div>
<div class="f" style="left:102px;top:337.0px;width:50px;height:13.2px;background:#ebebeb;"></div>
<div class="f" style="left:153px;top:337.0px;width:46.5px;height:13.2px;background:#ebebeb;"></div>
<div class="f" style="left:200px;top:337.0px;width:13px;height:13.2px;background:#ffc3c3;"></div>
<div class="f" style="left:213.5px;top:337.0px;width:12.5px;height:13.2px;background:#ffc3c3;"></div>
<div class="f" style="left:232px;top:337.0px;width:52.5px;height:13.2px;background:#ffc3c3;"></div>
<div class="f" style="left:285px;top:337.0px;width:26px;height:13.2px;background:#ffffff;"></div>
<div class="f" style="left:311.5px;top:337.0px;width:25.5px;height:13.2px;background:#ffffff;"></div>
<div class="f" style="left:337.5px;top:337.0px;width:78.5px;height:13.2px;background:#ffffff;"></div>
<div class="f" style="left:416.3px;top:337.0px;width:52.7px;height:13.2px;background:#ffffff;"></div>
<div class="f" style="left:469.2px;top:337.0px;width:41.0px;height:13.2px;background:#ffc3c3;"></div>
<div class="f" style="left:510.75px;top:337.0px;width:122.25px;height:13.2px;background:#ffc3c3;"></div>
<div class="f" style="left:633.5px;top:337.0px;width:86.3px;height:13.2px;background:#ffffff;"></div>
<div class="f" style="left:720.2px;top:337.0px;width:47.4px;height:13.2px;background:#ffffff;"></div>
<div class="f" style="left:768.2px;top:337.0px;width:24.1px;height:13.2px;background:#ffffff;"></div>
<div class="f" style="left:56px;top:350.2px;width:45px;height:13.2px;background:#ebebeb;"></div>
<div class="f" style="left:102px;top:350.2px;width:50px;height:13.2px;background:#ebebeb;"></div>
<div class="f" style="left:153px;top:350.2px;width:46.5px;height:13.2px;background:#ebebeb;"></div>
<div class="f" style="left:200px;top:350.2px;width:13px;height:13.2px;background:#ffc3c3;"></div>
<div class="f" style="left:213.5px;top:350.2px;width:12.5px;height:13.2px;background:#ffc3c3;"></div>
<div class="f" style="left:232px;top:350.2px;width:52.5px;height:13.2px;background:#ffc3c3;"></div>
<div class="f" style="left:285px;top:350.2px;width:26px;height:13.2px;background:#ffffff;"></div>
<div class="f" style="left:311.5px;top:350.2px;width:25.5px;height:13.2px;background:#ffffff;"></div>
<div class="f" style="left:337.5px;top:350.2px;width:78.5px;height:13.2px;background:#ffffff;"></div>
<div class="f" style="left:416.3px;top:350.2px;width:52.7px;height:13.2px;background:#ffffff;"></div>
<div class="f" style="left:469.2px;top:350.2px;width:41.0px;height:13.2px;background:#ffc3c3;"></div>
<div class="f" style="left:510.75px;top:350.2px;width:122.25px;height:13.2px;background:#ffc3c3;"></div>
<div class="f" style="left:633.5px;top:350.2px;width:86.3px;height:13.2px;background:#ffffff;"></div>
<div class="f" style="left:720.2px;top:350.2px;width:47.4px;height:13.2px;background:#ffffff;"></div>
<div class="f" style="left:768.2px;top:350.2px;width:24.1px;height:13.2px;background:#ffffff;"></div>
<div class="f" style="left:56px;top:363.4px;width:45px;height:13.2px;background:#ebebeb;"></div>
<div class="f" style="left:102px;top:363.4px;width:50px;height:13.2px;background:#ebebeb;"></div>
<div class="f" style="left:153px;top:363.4px;width:46.5px;height:13.2px;background:#ebebeb;"></div>
<div class="f" style="left:200px;top:363.4px;width:13px;height:13.2px;background:#ffc3c3;"></div>
<div class="f" style="left:213.5px;top:363.4px;width:12.5px;height:13.2px;background:#ffc3c3;"></div>
<div class="f" style="left:232px;top:363.4px;width:52.5px;height:13.2px;background:#ffc3c3;"></div>
<div class="f" style="left:285px;top:363.4px;width:26px;height:13.2px;background:#ffffff;"></div>
<div class="f" style="left:311.5px;top:363.4px;width:25.5px;height:13.2px;background:#ffffff;"></div>
<div class="f" style="left:337.5px;top:363.4px;width:78.5px;height:13.2px;background:#ffffff;"></div>
<div class="f" style="left:416.3px;top:363.4px;width:52.7px;height:13.2px;background:#ffffff;"></div>
<div class="f" style="left:469.2px;top:363.4px;width:41.0px;height:13.2px;background:#ffc3c3;"></div>
<div class="f" style="left:510.75px;top:363.4px;width:122.25px;height:13.2px;background:#ffc3c3;"></div>
<div class="f" style="left:633.5px;top:363.4px;width:86.3px;height:13.2px;background:#ffffff;"></div>
<div class="f" style="left:720.2px;top:363.4px;width:47.4px;height:13.2px;background:#ffffff;"></div>
<div class="f" style="left:768.2px;top:363.4px;width:24.1px;height:13.2px;background:#ffffff;"></div>
<div class="f" style="left:56px;top:376.6px;width:45px;height:13.2px;background:#ebebeb;"></div>
<div class="f" style="left:102px;top:376.6px;width:50px;height:13.2px;background:#ebebeb;"></div>
<div class="f" style="left:153px;top:376.6px;width:46.5px;height:13.2px;background:#ebebeb;"></div>
<div class="f" style="left:200px;top:376.6px;width:13px;height:13.2px;background:#ffc3c3;"></div>
<div class="f" style="left:213.5px;top:376.6px;width:12.5px;height:13.2px;background:#ffc3c3;"></div>
<div class="f" style="left:232px;top:376.6px;width:52.5px;height:13.2px;background:#ffc3c3;"></div>
<div class="f" style="left:285px;top:376.6px;width:26px;height:13.2px;background:#ffffff;"></div>
<div class="f" style="left:311.5px;top:376.6px;width:25.5px;height:13.2px;background:#ffffff;"></div>
<div class="f" style="left:337.5px;top:376.6px;width:78.5px;height:13.2px;background:#ffffff;"></div>
<div class="f" style="left:416.3px;top:376.6px;width:52.7px;height:13.2px;background:#ffffff;"></div>
<div class="f" style="left:469.2px;top:376.6px;width:41.0px;height:13.2px;background:#ffc3c3;"></div>
<div class="f" style="left:510.75px;top:376.6px;width:122.25px;height:13.2px;background:#ffc3c3;"></div>
<div class="f" style="left:633.5px;top:376.6px;width:86.3px;height:13.2px;background:#ffffff;"></div>
<div class="f" style="left:720.2px;top:376.6px;width:47.4px;height:13.2px;background:#ffffff;"></div>
<div class="f" style="left:768.2px;top:376.6px;width:24.1px;height:13.2px;background:#ffffff;"></div>
<div class="f" style="left:56px;top:389.8px;width:45px;height:13.2px;background:#ebebeb;"></div>
<div class="f" style="left:102px;top:389.8px;width:50px;height:13.2px;background:#ebebeb;"></div>
<div class="f" style="left:153px;top:389.8px;width:46.5px;height:13.2px;background:#ebebeb;"></div>
<div class="f" style="left:200px;top:389.8px;width:13px;height:13.2px;background:#ffc3c3;"></div>
<div class="f" style="left:213.5px;top:389.8px;width:12.5px;height:13.2px;background:#ffc3c3;"></div>
<div class="f" style="left:232px;top:389.8px;width:52.5px;height:13.2px;background:#ffc3c3;"></div>
<div class="f" style="left:285px;top:389.8px;width:26px;height:13.2px;background:#ffffff;"></div>
<div class="f" style="left:311.5px;top:389.8px;width:25.5px;height:13.2px;background:#ffffff;"></div>
<div class="f" style="left:337.5px;top:389.8px;width:78.5px;height:13.2px;background:#ffffff;"></div>
<div class="f" style="left:416.3px;top:389.8px;width:52.7px;height:13.2px;background:#ffffff;"></div>
<div class="f" style="left:469.2px;top:389.8px;width:41.0px;height:13.2px;background:#ffc3c3;"></div>
<div class="f" style="left:510.75px;top:389.8px;width:122.25px;height:13.2px;background:#ffc3c3;"></div>
<div class="f" style="left:633.5px;top:389.8px;width:86.3px;height:13.2px;background:#ffffff;"></div>
<div class="f" style="left:720.2px;top:389.8px;width:47.4px;height:13.2px;background:#ffffff;"></div>
<div class="f" style="left:768.2px;top:389.8px;width:24.1px;height:13.2px;background:#ffffff;"></div>
<div class="f" style="left:56px;top:403.0px;width:45px;height:13.2px;background:#ebebeb;"></div>
<div class="f" style="left:102px;top:403.0px;width:50px;height:13.2px;background:#ebebeb;"></div>
<div class="f" style="left:153px;top:403.0px;width:46.5px;height:13.2px;background:#ebebeb;"></div>
<div class="f" style="left:200px;top:403.0px;width:13px;height:13.2px;background:#ffc3c3;"></div>
<div class="f" style="left:213.5px;top:403.0px;width:12.5px;height:13.2px;background:#ffc3c3;"></div>
<div class="f" style="left:232px;top:403.0px;width:52.5px;height:13.2px;background:#ffc3c3;"></div>
<div class="f" style="left:285px;top:403.0px;width:26px;height:13.2px;background:#ffffff;"></div>
<div class="f" style="left:311.5px;top:403.0px;width:25.5px;height:13.2px;background:#ffffff;"></div>
<div class="f" style="left:337.5px;top:403.0px;width:78.5px;height:13.2px;background:#ffffff;"></div>
<div class="f" style="left:416.3px;top:403.0px;width:52.7px;height:13.2px;background:#ffffff;"></div>
<div class="f" style="left:469.2px;top:403.0px;width:41.0px;height:13.2px;background:#ffc3c3;"></div>
<div class="f" style="left:510.75px;top:403.0px;width:122.25px;height:13.2px;background:#ffc3c3;"></div>
<div class="f" style="left:633.5px;top:403.0px;width:86.3px;height:13.2px;background:#ffffff;"></div>
<div class="f" style="left:720.2px;top:403.0px;width:47.4px;height:13.2px;background:#ffffff;"></div>
<div class="f" style="left:768.2px;top:403.0px;width:24.1px;height:13.2px;background:#ffffff;"></div>
<div class="b" style="left:46.8px;top:205px;width:7.2px;height:211px;background:#c9cacf;"></div>
<svg style="position:absolute;left:46.8px;top:204.6px" width="7.2" height="8.4"><rect x="0.5" y="0.5" width="6.2" height="7.4" rx="3" fill="#e4e6ea" stroke="#a4acb8" stroke-width="1"/><path d="M1.60 5.40L3.60 2.90L5.60 5.40Z" fill="#4a5262"/></svg>
<svg style="position:absolute;left:48px;top:278px" width="5.0" height="52.6"><circle cx="1.2" cy="1.00" r="0.7" fill="#f8f8f8"/><circle cx="3.2" cy="2.10" r="0.7" fill="#f8f8f8"/><circle cx="1.2" cy="3.20" r="0.7" fill="#f8f8f8"/><circle cx="3.2" cy="4.30" r="0.7" fill="#f8f8f8"/><circle cx="1.2" cy="5.40" r="0.7" fill="#f8f8f8"/><circle cx="3.2" cy="6.50" r="0.7" fill="#f8f8f8"/><circle cx="1.2" cy="7.60" r="0.7" fill="#f8f8f8"/><circle cx="3.2" cy="8.70" r="0.7" fill="#f8f8f8"/><circle cx="1.2" cy="9.80" r="0.7" fill="#f8f8f8"/><circle cx="3.2" cy="10.90" r="0.7" fill="#f8f8f8"/><circle cx="1.2" cy="12.00" r="0.7" fill="#f8f8f8"/><circle cx="3.2" cy="13.10" r="0.7" fill="#f8f8f8"/><circle cx="1.2" cy="14.20" r="0.7" fill="#f8f8f8"/><circle cx="3.2" cy="15.30" r="0.7" fill="#f8f8f8"/><circle cx="1.2" cy="16.40" r="0.7" fill="#f8f8f8"/><circle cx="3.2" cy="17.50" r="0.7" fill="#f8f8f8"/><circle cx="1.2" cy="18.60" r="0.7" fill="#f8f8f8"/><circle cx="3.2" cy="19.70" r="0.7" fill="#f8f8f8"/><circle cx="1.2" cy="20.80" r="0.7" fill="#f8f8f8"/><circle cx="3.2" cy="21.90" r="0.7" fill="#f8f8f8"/><circle cx="1.2" cy="23.00" r="0.7" fill="#f8f8f8"/><circle cx="3.2" cy="24.10" r="0.7" fill="#f8f8f8"/><circle cx="1.2" cy="25.20" r="0.7" fill="#f8f8f8"/><circle cx="3.2" cy="26.30" r="0.7" fill="#f8f8f8"/><circle cx="1.2" cy="27.40" r="0.7" fill="#f8f8f8"/><circle cx="3.2" cy="28.50" r="0.7" fill="#f8f8f8"/><circle cx="1.2" cy="29.60" r="0.7" fill="#f8f8f8"/><circle cx="3.2" cy="30.70" r="0.7" fill="#f8f8f8"/><circle cx="1.2" cy="31.80" r="0.7" fill="#f8f8f8"/><circle cx="3.2" cy="32.90" r="0.7" fill="#f8f8f8"/><circle cx="1.2" cy="34.00" r="0.7" fill="#f8f8f8"/><circle cx="3.2" cy="35.10" r="0.7" fill="#f8f8f8"/><circle cx="1.2" cy="36.20" r="0.7" fill="#f8f8f8"/><circle cx="3.2" cy="37.30" r="0.7" fill="#f8f8f8"/><circle cx="1.2" cy="38.40" r="0.7" fill="#f8f8f8"/><circle cx="3.2" cy="39.50" r="0.7" fill="#f8f8f8"/><circle cx="1.2" cy="40.60" r="0.7" fill="#f8f8f8"/><circle cx="3.2" cy="41.70" r="0.7" fill="#f8f8f8"/><circle cx="1.2" cy="42.80" r="0.7" fill="#f8f8f8"/><circle cx="3.2" cy="43.90" r="0.7" fill="#f8f8f8"/><circle cx="1.2" cy="45.00" r="0.7" fill="#f8f8f8"/><circle cx="3.2" cy="46.10" r="0.7" fill="#f8f8f8"/><circle cx="1.2" cy="47.20" r="0.7" fill="#f8f8f8"/><circle cx="3.2" cy="48.30" r="0.7" fill="#f8f8f8"/><circle cx="1.2" cy="49.40" r="0.7" fill="#f8f8f8"/><circle cx="3.2" cy="50.50" r="0.7" fill="#f8f8f8"/></svg>
<svg style="position:absolute;left:46.8px;top:409.6px" width="7.2" height="6.4"><rect x="0.5" y="0.5" width="6.2" height="5.4" rx="1.5" fill="#e4e6ea" stroke="#a4acb8" stroke-width="1"/><path d="M1.60 2.00L3.60 4.50L5.60 2.00Z" fill="#4a5262"/></svg>
<div class="b" style="left:43.8px;top:406.4px;width:72.6px;height:36.8px;border:2.6px solid #0000c8;border-radius:1.5px;z-index:5;"></div>
<div class="b" style="left:56.5px;top:419.2px;width:44.1px;height:11.6px;background:#e4e4e4;border:1px solid #fafafa;border-right-color:#8e9aac;border-bottom:1.5px solid #8e9aac;border-radius:1px;"></div>
<div class="t c" style="left:56.5px;width:44.1px;text-align:center;top:420.75px;color:#2e2e2e;">Generovat</div>
<div class="t r" style="right:292.2px;top:418.33px;color:#2a2a2a;font-size:8.0px;transform:scaleX(0.917);font-weight:bold;">Celkem</div>
<div class="f" style="left:510px;top:418px;width:122.4px;height:13px;background:#ebebeb;"></div>
<div class="t r" style="left:505.62px;width:125.28px;text-align:right;top:420.75px;color:#3a3a3a;overflow:hidden">918.00</div>
<div class="b" style="left:229.4px;top:432.3px;width:562.7px;height:8.6px;background:#9eabbd;"></div>
<div class="b" style="left:237px;top:432.3px;width:289px;height:8.6px;background:linear-gradient(#e8e8ea,#d4d6da);border:1px solid #b8bcc4;"></div>
<svg style="position:absolute;left:333px;top:434.3px" width="98.8" height="5.0"><circle cx="1.00" cy="1.2" r="0.7" fill="#f8f8f8"/><circle cx="2.10" cy="3.2" r="0.7" fill="#f8f8f8"/><circle cx="3.20" cy="1.2" r="0.7" fill="#f8f8f8"/><circle cx="4.30" cy="3.2" r="0.7" fill="#f8f8f8"/><circle cx="5.40" cy="1.2" r="0.7" fill="#f8f8f8"/><circle cx="6.50" cy="3.2" r="0.7" fill="#f8f8f8"/><circle cx="7.60" cy="1.2" r="0.7" fill="#f8f8f8"/><circle cx="8.70" cy="3.2" r="0.7" fill="#f8f8f8"/><circle cx="9.80" cy="1.2" r="0.7" fill="#f8f8f8"/><circle cx="10.90" cy="3.2" r="0.7" fill="#f8f8f8"/><circle cx="12.00" cy="1.2" r="0.7" fill="#f8f8f8"/><circle cx="13.10" cy="3.2" r="0.7" fill="#f8f8f8"/><circle cx="14.20" cy="1.2" r="0.7" fill="#f8f8f8"/><circle cx="15.30" cy="3.2" r="0.7" fill="#f8f8f8"/><circle cx="16.40" cy="1.2" r="0.7" fill="#f8f8f8"/><circle cx="17.50" cy="3.2" r="0.7" fill="#f8f8f8"/><circle cx="18.60" cy="1.2" r="0.7" fill="#f8f8f8"/><circle cx="19.70" cy="3.2" r="0.7" fill="#f8f8f8"/><circle cx="20.80" cy="1.2" r="0.7" fill="#f8f8f8"/><circle cx="21.90" cy="3.2" r="0.7" fill="#f8f8f8"/><circle cx="23.00" cy="1.2" r="0.7" fill="#f8f8f8"/><circle cx="24.10" cy="3.2" r="0.7" fill="#f8f8f8"/><circle cx="25.20" cy="1.2" r="0.7" fill="#f8f8f8"/><circle cx="26.30" cy="3.2" r="0.7" fill="#f8f8f8"/><circle cx="27.40" cy="1.2" r="0.7" fill="#f8f8f8"/><circle cx="28.50" cy="3.2" r="0.7" fill="#f8f8f8"/><circle cx="29.60" cy="1.2" r="0.7" fill="#f8f8f8"/><circle cx="30.70" cy="3.2" r="0.7" fill="#f8f8f8"/><circle cx="31.80" cy="1.2" r="0.7" fill="#f8f8f8"/><circle cx="32.90" cy="3.2" r="0.7" fill="#f8f8f8"/><circle cx="34.00" cy="1.2" r="0.7" fill="#f8f8f8"/><circle cx="35.10" cy="3.2" r="0.7" fill="#f8f8f8"/><circle cx="36.20" cy="1.2" r="0.7" fill="#f8f8f8"/><circle cx="37.30" cy="3.2" r="0.7" fill="#f8f8f8"/><circle cx="38.40" cy="1.2" r="0.7" fill="#f8f8f8"/><circle cx="39.50" cy="3.2" r="0.7" fill="#f8f8f8"/><circle cx="40.60" cy="1.2" r="0.7" fill="#f8f8f8"/><circle cx="41.70" cy="3.2" r="0.7" fill="#f8f8f8"/><circle cx="42.80" cy="1.2" r="0.7" fill="#f8f8f8"/><circle cx="43.90" cy="3.2" r="0.7" fill="#f8f8f8"/><circle cx="45.00" cy="1.2" r="0.7" fill="#f8f8f8"/><circle cx="46.10" cy="3.2" r="0.7" fill="#f8f8f8"/><circle cx="47.20" cy="1.2" r="0.7" fill="#f8f8f8"/><circle cx="48.30" cy="3.2" r="0.7" fill="#f8f8f8"/><circle cx="49.40" cy="1.2" r="0.7" fill="#f8f8f8"/><circle cx="50.50" cy="3.2" r="0.7" fill="#f8f8f8"/><circle cx="51.60" cy="1.2" r="0.7" fill="#f8f8f8"/><circle cx="52.70" cy="3.2" r="0.7" fill="#f8f8f8"/><circle cx="53.80" cy="1.2" r="0.7" fill="#f8f8f8"/><circle cx="54.90" cy="3.2" r="0.7" fill="#f8f8f8"/><circle cx="56.00" cy="1.2" r="0.7" fill="#f8f8f8"/><circle cx="57.10" cy="3.2" r="0.7" fill="#f8f8f8"/><circle cx="58.20" cy="1.2" r="0.7" fill="#f8f8f8"/><circle cx="59.30" cy="3.2" r="0.7" fill="#f8f8f8"/><circle cx="60.40" cy="1.2" r="0.7" fill="#f8f8f8"/><circle cx="61.50" cy="3.2" r="0.7" fill="#f8f8f8"/><circle cx="62.60" cy="1.2" r="0.7" fill="#f8f8f8"/><circle cx="63.70" cy="3.2" r="0.7" fill="#f8f8f8"/><circle cx="64.80" cy="1.2" r="0.7" fill="#f8f8f8"/><circle cx="65.90" cy="3.2" r="0.7" fill="#f8f8f8"/><circle cx="67.00" cy="1.2" r="0.7" fill="#f8f8f8"/><circle cx="68.10" cy="3.2" r="0.7" fill="#f8f8f8"/><circle cx="69.20" cy="1.2" r="0.7" fill="#f8f8f8"/><circle cx="70.30" cy="3.2" r="0.7" fill="#f8f8f8"/><circle cx="71.40" cy="1.2" r="0.7" fill="#f8f8f8"/><circle cx="72.50" cy="3.2" r="0.7" fill="#f8f8f8"/><circle cx="73.60" cy="1.2" r="0.7" fill="#f8f8f8"/><circle cx="74.70" cy="3.2" r="0.7" fill="#f8f8f8"/><circle cx="75.80" cy="1.2" r="0.7" fill="#f8f8f8"/><circle cx="76.90" cy="3.2" r="0.7" fill="#f8f8f8"/><circle cx="78.00" cy="1.2" r="0.7" fill="#f8f8f8"/><circle cx="79.10" cy="3.2" r="0.7" fill="#f8f8f8"/><circle cx="80.20" cy="1.2" r="0.7" fill="#f8f8f8"/><circle cx="81.30" cy="3.2" r="0.7" fill="#f8f8f8"/><circle cx="82.40" cy="1.2" r="0.7" fill="#f8f8f8"/><circle cx="83.50" cy="3.2" r="0.7" fill="#f8f8f8"/><circle cx="84.60" cy="1.2" r="0.7" fill="#f8f8f8"/><circle cx="85.70" cy="3.2" r="0.7" fill="#f8f8f8"/><circle cx="86.80" cy="1.2" r="0.7" fill="#f8f8f8"/><circle cx="87.90" cy="3.2" r="0.7" fill="#f8f8f8"/><circle cx="89.00" cy="1.2" r="0.7" fill="#f8f8f8"/><circle cx="90.10" cy="3.2" r="0.7" fill="#f8f8f8"/><circle cx="91.20" cy="1.2" r="0.7" fill="#f8f8f8"/><circle cx="92.30" cy="3.2" r="0.7" fill="#f8f8f8"/><circle cx="93.40" cy="1.2" r="0.7" fill="#f8f8f8"/><circle cx="94.50" cy="3.2" r="0.7" fill="#f8f8f8"/><circle cx="95.60" cy="1.2" r="0.7" fill="#f8f8f8"/><circle cx="96.70" cy="3.2" r="0.7" fill="#f8f8f8"/></svg>
<svg style="position:absolute;left:229.4px;top:432.3px" width="8" height="8.6"><rect x="0.5" y="0.5" width="7" height="7.6" rx="1.5" fill="#e4e6ea" stroke="#a4acb8" stroke-width="1"/><path d="M5.20 2.30L2.70 4.30L5.20 6.30Z" fill="#4a5262"/></svg>
<svg style="position:absolute;left:784.2px;top:432.3px" width="8" height="8.6"><rect x="0.5" y="0.5" width="7" height="7.6" rx="1.5" fill="#e4e6ea" stroke="#a4acb8" stroke-width="1"/><path d="M2.80 2.30L5.30 4.30L2.80 6.30Z" fill="#4a5262"/></svg>
<div class="b" style="left:0;top:8.10px;width:800px;height:2px;background:linear-gradient(rgba(255,255,255,0),rgba(255,255,255,0.38),rgba(255,255,255,0));"></div>
<div class="b" style="left:0;top:28.47px;width:800px;height:2px;background:linear-gradient(rgba(255,255,255,0),rgba(255,255,255,0.38),rgba(255,255,255,0));"></div>
<div class="b" style="left:0;top:38.66px;width:800px;height:2px;background:linear-gradient(rgba(255,255,255,0),rgba(255,255,255,0.22),rgba(255,255,255,0));"></div>
<div class="b" style="left:0;top:48.84px;width:800px;height:2px;background:linear-gradient(rgba(255,255,255,0),rgba(255,255,255,0.22),rgba(255,255,255,0));"></div>
<div class="b" style="left:0;top:59.03px;width:800px;height:2px;background:linear-gradient(rgba(255,255,255,0),rgba(255,255,255,0.38),rgba(255,255,255,0));"></div>
<div class="b" style="left:0;top:79.39px;width:800px;height:2px;background:linear-gradient(rgba(255,255,255,0),rgba(255,255,255,0.38),rgba(255,255,255,0));"></div>
<div class="b" style="left:0;top:89.58px;width:800px;height:2px;background:linear-gradient(rgba(255,255,255,0),rgba(255,255,255,0.22),rgba(255,255,255,0));"></div>
<div class="b" style="left:0;top:99.77px;width:800px;height:2px;background:linear-gradient(rgba(255,255,255,0),rgba(255,255,255,0.22),rgba(255,255,255,0));"></div>
<div class="b" style="left:0;top:109.95px;width:800px;height:2px;background:linear-gradient(rgba(255,255,255,0),rgba(255,255,255,0.38),rgba(255,255,255,0));"></div>
<div class="b" style="left:0;top:130.32px;width:800px;height:2px;background:linear-gradient(rgba(255,255,255,0),rgba(255,255,255,0.38),rgba(255,255,255,0));"></div>
<div class="b" style="left:0;top:140.50px;width:800px;height:2px;background:linear-gradient(rgba(255,255,255,0),rgba(255,255,255,0.22),rgba(255,255,255,0));"></div>
<div class="b" style="left:0;top:150.69px;width:800px;height:2px;background:linear-gradient(rgba(255,255,255,0),rgba(255,255,255,0.22),rgba(255,255,255,0));"></div>
<div class="b" style="left:0;top:160.88px;width:800px;height:2px;background:linear-gradient(rgba(255,255,255,0),rgba(255,255,255,0.38),rgba(255,255,255,0));"></div>
<div class="b" style="left:0;top:181.25px;width:800px;height:2px;background:linear-gradient(rgba(255,255,255,0),rgba(255,255,255,0.38),rgba(255,255,255,0));"></div>
<div class="b" style="left:0;top:191.43px;width:800px;height:2px;background:linear-gradient(rgba(255,255,255,0),rgba(255,255,255,0.22),rgba(255,255,255,0));"></div>
<div class="b" style="left:0;top:201.62px;width:800px;height:2px;background:linear-gradient(rgba(255,255,255,0),rgba(255,255,255,0.22),rgba(255,255,255,0));"></div>
<div class="b" style="left:0;top:211.80px;width:800px;height:2px;background:linear-gradient(rgba(255,255,255,0),rgba(255,255,255,0.38),rgba(255,255,255,0));"></div>
<div class="b" style="left:0;top:232.17px;width:800px;height:2px;background:linear-gradient(rgba(255,255,255,0),rgba(255,255,255,0.38),rgba(255,255,255,0));"></div>
<div class="b" style="left:0;top:242.36px;width:800px;height:2px;background:linear-gradient(rgba(255,255,255,0),rgba(255,255,255,0.22),rgba(255,255,255,0));"></div>
<div class="b" style="left:0;top:252.54px;width:800px;height:2px;background:linear-gradient(rgba(255,255,255,0),rgba(255,255,255,0.22),rgba(255,255,255,0));"></div>
<div class="b" style="left:0;top:262.73px;width:800px;height:2px;background:linear-gradient(rgba(255,255,255,0),rgba(255,255,255,0.38),rgba(255,255,255,0));"></div>
<div class="b" style="left:0;top:283.10px;width:800px;height:2px;background:linear-gradient(rgba(255,255,255,0),rgba(255,255,255,0.38),rgba(255,255,255,0));"></div>
<div class="b" style="left:0;top:293.28px;width:800px;height:2px;background:linear-gradient(rgba(255,255,255,0),rgba(255,255,255,0.22),rgba(255,255,255,0));"></div>
<div class="b" style="left:0;top:303.47px;width:800px;height:2px;background:linear-gradient(rgba(255,255,255,0),rgba(255,255,255,0.22),rgba(255,255,255,0));"></div>
<div class="b" style="left:0;top:313.65px;width:800px;height:2px;background:linear-gradient(rgba(255,255,255,0),rgba(255,255,255,0.38),rgba(255,255,255,0));"></div>
<div class="b" style="left:0;top:334.02px;width:800px;height:2px;background:linear-gradient(rgba(255,255,255,0),rgba(255,255,255,0.38),rgba(255,255,255,0));"></div>
<div class="b" style="left:0;top:344.21px;width:800px;height:2px;background:linear-gradient(rgba(255,255,255,0),rgba(255,255,255,0.22),rgba(255,255,255,0));"></div>
<div class="b" style="left:0;top:354.39px;width:800px;height:2px;background:linear-gradient(rgba(255,255,255,0),rgba(255,255,255,0.22),rgba(255,255,255,0));"></div>
<div class="b" style="left:0;top:364.58px;width:800px;height:2px;background:linear-gradient(rgba(255,255,255,0),rgba(255,255,255,0.38),rgba(255,255,255,0));"></div>
<div class="b" style="left:0;top:384.95px;width:800px;height:2px;background:linear-gradient(rgba(255,255,255,0),rgba(255,255,255,0.38),rgba(255,255,255,0));"></div>
<div class="b" style="left:0;top:395.13px;width:800px;height:2px;background:linear-gradient(rgba(255,255,255,0),rgba(255,255,255,0.22),rgba(255,255,255,0));"></div>
<div class="b" style="left:0;top:405.32px;width:800px;height:2px;background:linear-gradient(rgba(255,255,255,0),rgba(255,255,255,0.22),rgba(255,255,255,0));"></div>
<div class="b" style="left:0;top:415.50px;width:800px;height:2px;background:linear-gradient(rgba(255,255,255,0),rgba(255,255,255,0.38),rgba(255,255,255,0));"></div>
<div class="b" style="left:0;top:435.87px;width:800px;height:2px;background:linear-gradient(rgba(255,255,255,0),rgba(255,255,255,0.38),rgba(255,255,255,0));"></div>
<div class="b" style="left:0;top:446.06px;width:800px;height:2px;background:linear-gradient(rgba(255,255,255,0),rgba(255,255,255,0.22),rgba(255,255,255,0));"></div>
<svg style="position:absolute;left:0;top:0" width="60" height="260"><path d="M15.3 205H33.1V191L53.9 217.8L33.1 244.8V230.8H15.3Z" fill="#0000c8"/></svg>
</body></html>
